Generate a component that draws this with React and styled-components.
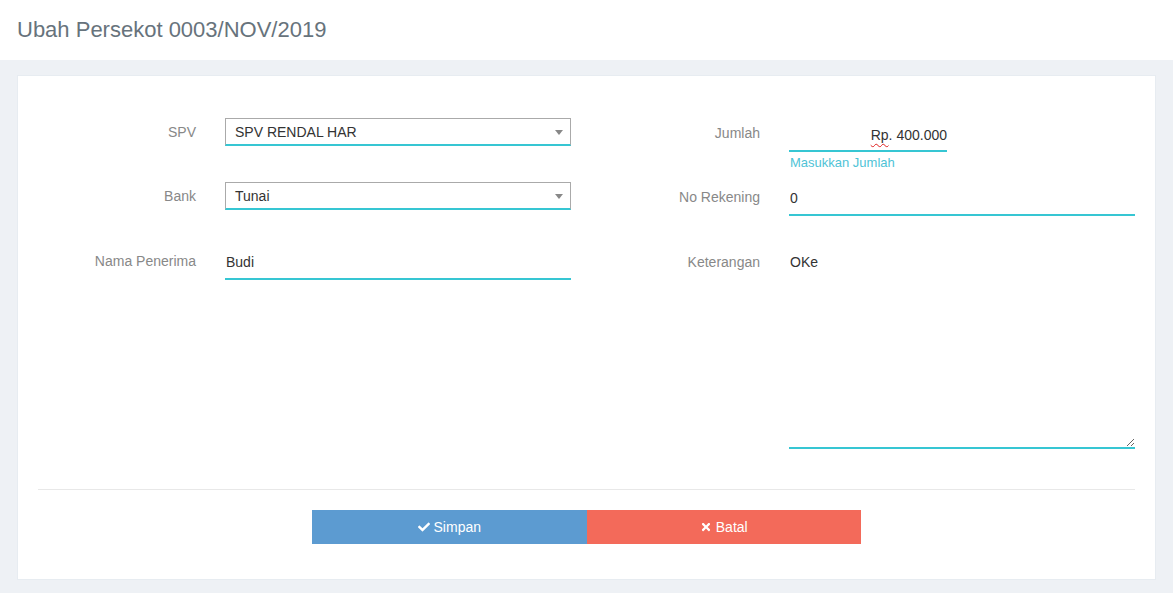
import React from "react";
import styled, { createGlobalStyle } from "styled-components";
import { FaCheck, FaTimes } from "react-icons/fa";

const Global = createGlobalStyle`
  html, body { margin: 0; padding: 0; background: #eef1f5; }
  body { font-family: "Liberation Sans", Arial, sans-serif; font-size: 14px; color: #444; }
  * { box-sizing: border-box; }
`;

const Header = styled.header`
  height: 60px;
  background: #fff;
  display: flex;
  align-items: center;
  padding: 0 17px;
`;

const Title = styled.h1`
  margin: 0;
  font-size: 22px;
  font-weight: 400;
  color: #67737c;
  letter-spacing: 0;
`;

const Page = styled.main`
  padding: 15px 17px 14px;
`;

const Card = styled.section`
  background: #fff;
  border: 1px solid #e7ecf1;
  padding: 42px 20px 35px;
`;

const Columns = styled.div`
  display: flex;
  justify-content: space-between;
`;

const FormGrid = styled.div`
  display: grid;
  grid-template-columns: ${(p) => p.$label}px 346px;
  grid-template-rows: 64px 64px auto;
  column-gap: 29px;
  align-items: start;
`;

const Label = styled.label`
  text-align: right;
  color: #888;
  font-size: 14px;
  line-height: 20px;
  padding-top: ${(p) => p.$pt || 4}px;
`;

const SelectBox = styled.div`
  position: relative;
  height: 28px;
  border: 1px solid #aaa;
  border-bottom: 2px solid #36c6d3;
  padding: 0 9px;
  display: flex;
  align-items: center;
  color: #333;
  font-size: 14px;
  &::after {
    content: "";
    position: absolute;
    right: 7px;
    top: 11px;
    border-left: 4px solid transparent;
    border-right: 4px solid transparent;
    border-top: 5px solid #888;
  }
`;

const Control = styled.div`
  display: flex;
  flex-direction: column;
`;

const Input = styled.input`
  height: 34px;
  width: ${(p) => p.$w || "100%"};
  border: none;
  border-bottom: 2px solid #36c6d3;
  padding: 0 1px;
  font-family: inherit;
  font-size: 14px;
  color: #333;
  outline: none;
  background: transparent;
`;

const AmountBox = styled.div`
  height: 34px;
  width: 158px;
  border-bottom: 2px solid #36c6d3;
  display: flex;
  align-items: center;
  justify-content: flex-end;
  font-size: 14px;
  color: #333;
  padding-top: 1px;
`;

const Spell = styled.span`
  text-decoration: underline wavy #e02020;
  text-decoration-thickness: 1px;
  text-underline-offset: 3px;
`;

const Help = styled.div`
  color: #4fc3d6;
  font-size: 13px;
  line-height: 17px;
  margin-top: 2px;
  padding-left: 1px;
`;

const TextArea = styled.textarea`
  height: 203px;
  width: 100%;
  border: none;
  border-bottom: 2px solid #36c6d3;
  padding: 6px 1px;
  font-family: inherit;
  font-size: 14px;
  line-height: 20px;
  color: #333;
  outline: none;
  resize: vertical;
  display: block;
`;

const Divider = styled.hr`
  border: none;
  border-top: 1px solid #e8e8e8;
  margin: 40px 0 20px;
`;

const Actions = styled.div`
  display: flex;
  justify-content: center;
`;

const Button = styled.button`
  width: 274.5px;
  height: 34px;
  border: none;
  background: ${(p) => p.$bg};
  color: #fff;
  font-family: inherit;
  font-size: 14px;
  display: flex;
  align-items: center;
  justify-content: center;
  gap: 4px;
  cursor: pointer;
  svg { font-size: 12px; }
`;

export default function App() {
  return (
    <>
      <Global />
      <Header>
        <Title>Ubah Persekot 0003/NOV/2019</Title>
      </Header>
      <Page>
        <Card>
          <Columns>
            <FormGrid $label={158}>
              <Label $pt={4}>SPV</Label>
              <SelectBox>SPV RENDAL HAR</SelectBox>
              <Label $pt={4}>Bank</Label>
              <SelectBox>Tunai</SelectBox>
              <Label $pt={5}>Nama Penerima</Label>
              <Input defaultValue="Budi" />
            </FormGrid>
            <FormGrid $label={158}>
              <Label $pt={5}>Jumlah</Label>
              <Control>
                <AmountBox>
                  <span><Spell>Rp</Spell>. 400.000</span>
                </AmountBox>
                <Help>Masukkan Jumlah</Help>
              </Control>
              <Label $pt={5}>No Rekening</Label>
              <Input defaultValue="0" />
              <Label $pt={6}>Keterangan</Label>
              <TextArea defaultValue="OKe" />
            </FormGrid>
          </Columns>
          <Divider />
          <Actions>
            <Button $bg="#5c9bd1"><FaCheck />Simpan</Button>
            <Button $bg="#f36a5a"><FaTimes />Batal</Button>
          </Actions>
        </Card>
      </Page>
    </>
  );
}
